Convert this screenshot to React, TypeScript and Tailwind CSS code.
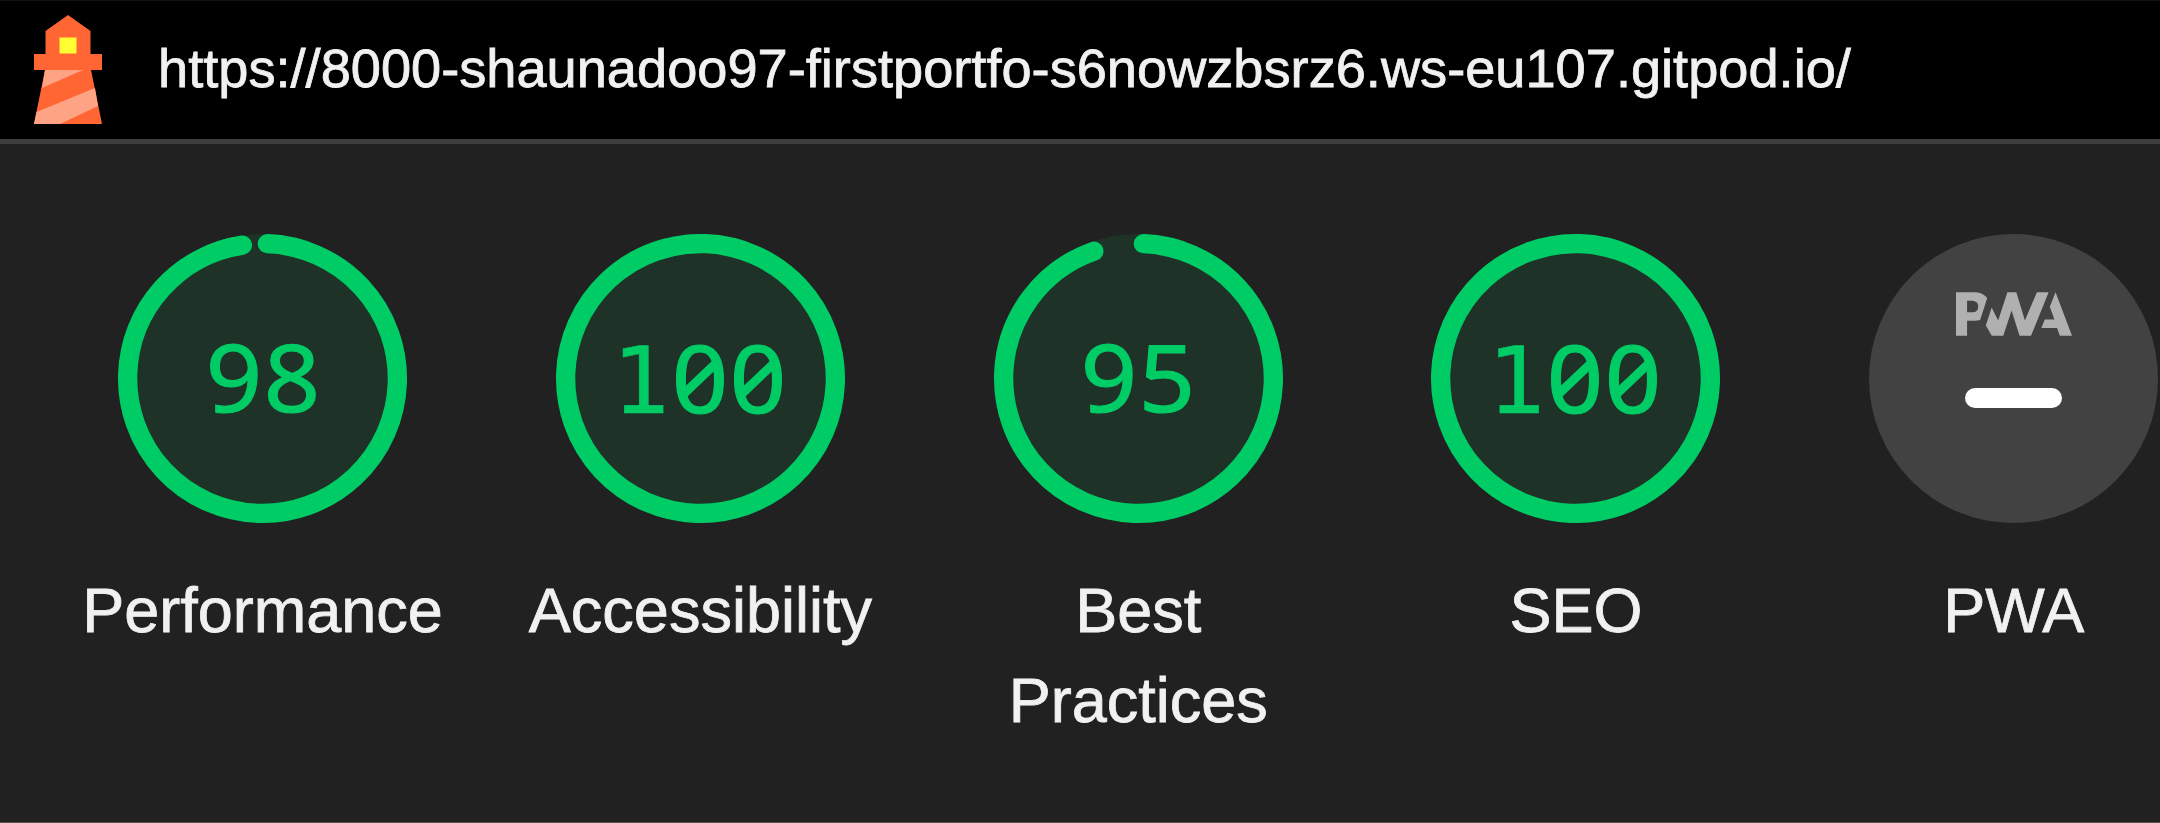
import { SiPwa } from "react-icons/si";

const LABEL =
  "mt-[42px] font-['Liberation_Sans',Arial,sans-serif] text-[63px] leading-[90px] text-[#f1f1f1] text-center [-webkit-text-stroke:0.8px_#f1f1f1]";

function Digit({ d }: { d: string }) {
  if (d === "1") {
    return (
      <span className="inline-block w-[58px] text-center font-['DejaVu_Sans',sans-serif] text-[92px] leading-none [-webkit-text-stroke:0.6px_#00cc66]">
        1
      </span>
    );
  }
  return (
    <span className="inline-block w-[58px] scale-x-[1.05] text-center font-['Noto_Sans',sans-serif] text-[94px] leading-none [-webkit-text-stroke:1.2px_#00cc66] [font-feature-settings:'zero']">
      {d}
    </span>
  );
}

function Gauge({ score, label }: { score: number; label: string }) {
  const r = 56;
  const circ = 2 * Math.PI * r;
  const arc = score === 100 ? circ : (score / 100) * circ - 3.45;
  return (
    <div className="flex w-[437.8px] shrink-0 flex-col items-center">
      <div className="grid size-[289px] place-items-center">
        <svg viewBox="0 0 120 120" className="col-start-1 row-start-1 size-[289px]">
          <circle cx="60" cy="60" r="60" fill="#1e3228" />
          <circle
            cx="60"
            cy="60"
            r={r}
            fill="none"
            stroke="#00cc66"
            strokeWidth="8"
            strokeLinecap="round"
            strokeDasharray={`${arc} ${circ}`}
            transform="rotate(-87.95 60 60)"
          />
        </svg>
        <div
          className={`col-start-1 row-start-1 flex items-baseline text-[#00cc66] ${
            score === 100 ? "pr-px" : "pb-[5px]"
          }`}
        >
          {String(score).split("").map((d, i) => (
            <Digit key={i} d={d} />
          ))}
        </div>
      </div>
      <div className={`${LABEL} flex w-[300px] justify-center`}>{label}</div>
    </div>
  );
}

function Lighthouse() {
  return (
    <svg viewBox="0 0 68 109" className="h-[109px] w-[68px] shrink-0">
      <path d="M11.5 16 34 0l22.500 16v23H68v16H57l11 54H0l11-54H0V39h11.500z" fill="#ff6633" />
      <path d="M11 55h38L8 73zM61 73l3 18-38 18H0l2.500-12z" fill="#ffa385" />
      <path d="M25.500 22.500h17v16h-17z" fill="#ffff33" />
    </svg>
  );
}

export default function App() {
  return (
    <div className="flex h-[823px] w-[2160px] flex-col overflow-hidden border-b border-[#555050] bg-[#212121]">
      <header className="flex h-[144px] shrink-0 border-t border-b-[5px] border-t-[#111111] border-b-[#3d3d3d] bg-black pt-[14px] pl-[34px]">
        <Lighthouse />
        <div className="mt-[21px] ml-[56px] font-['Liberation_Sans',Arial,sans-serif] text-[54.2px] leading-[64px] whitespace-nowrap text-[#f1f1f1] [-webkit-text-stroke:0.8px_#f1f1f1]">
          https://8000-shaunadoo97-firstportfo-s6nowzbsrz6.ws-eu107.gitpod.io/
        </div>
      </header>
      <main className="flex pt-[90px] pl-[43.7px]">
        <Gauge score={98} label="Performance" />
        <Gauge score={100} label="Accessibility" />
        <Gauge score={95} label="Best Practices" />
        <Gauge score={100} label="SEO" />
        <div className="flex w-[437.8px] shrink-0 flex-col items-center">
          <div className="flex size-[289px] flex-col items-center rounded-full bg-[#424242]">
            <SiPwa className="mt-[22px] size-[116px] text-[#b0b0b0]" />
            <div className="mt-[16px] h-5 w-[97px] rounded-full bg-white" />
          </div>
          <div className={LABEL}>PWA</div>
        </div>
      </main>
    </div>
  );
}
